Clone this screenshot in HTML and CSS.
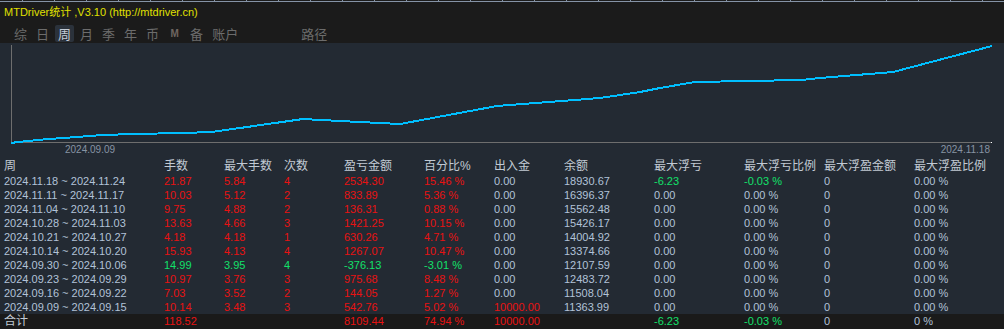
FILE: index.html
```html
<!DOCTYPE html>
<html lang="zh">
<head>
<meta charset="utf-8">
<title>MTDriver统计</title>
<link rel="stylesheet" href="styles.css">
</head>
<body>
<div class="app">
  <header class="top">
    <div class="ruler"></div>
    <div class="title">MTDriver统计 ,V3.10 (http://mtdriver.cn)</div>
    <nav class="tabs">
      <span class="tab">综</span>
      <span class="tab">日</span>
      <span class="tab active">周</span>
      <span class="tab">月</span>
      <span class="tab">季</span>
      <span class="tab">年</span>
      <span class="tab">币</span>
      <span class="tab tab-m">M</span>
      <span class="tab">备</span>
      <span class="tab">账户</span>
      <span class="tab tab-path">路径</span>
    </nav>
  </header>

  <div class="chart">
    <svg width="1004" height="116" viewBox="0 0 1004 116">
      <line x1="11.5" y1="2" x2="11.5" y2="100" stroke="#6e6e6e" stroke-width="1"/>
      <line x1="11" y1="99.5" x2="991" y2="99.5" stroke="#6e6e6e" stroke-width="1"/>
      <rect x="991" y="99" width="1" height="1" fill="#ffffff"/>
      <polyline fill="none" stroke="#00bfff" stroke-width="2" shape-rendering="crispEdges"
        points="11,100 18,99 43,96.5 103,92 133,91 183,90 212,89 303,76 340,78 400,81 497,63 600,55 640,49 660,45 695,39 747,38 802,37 820,35 893,29 992,3"/>
      <text x="65" y="110" class="axis-label">2024.09.09</text>
      <text x="990" y="110" class="axis-label" text-anchor="end">2024.11.18</text>
    </svg>
  </div>

  <div class="grid">
    <div class="row head">
      <span>周</span><span>手数</span><span>最大手数</span><span>次数</span><span>盈亏金额</span><span>百分比%</span><span>出入金</span><span>余额</span><span>最大浮亏</span><span>最大浮亏比例</span><span>最大浮盈金额</span><span>最大浮盈比例</span>
    </div>
    <div class="row">
      <span>2024.11.18 ~ 2024.11.24</span><span class="r">21.87</span><span class="r">5.84</span><span class="r">4</span><span class="r">2534.30</span><span class="r">15.46 %</span><span>0.00</span><span>18930.67</span><span class="g">-6.23</span><span class="g">-0.03 %</span><span>0</span><span>0.00 %</span>
    </div>
    <div class="row">
      <span>2024.11.11 ~ 2024.11.17</span><span class="r">10.03</span><span class="r">5.12</span><span class="r">2</span><span class="r">833.89</span><span class="r">5.36 %</span><span>0.00</span><span>16396.37</span><span>0.00</span><span>0.00 %</span><span>0</span><span>0.00 %</span>
    </div>
    <div class="row">
      <span>2024.11.04 ~ 2024.11.10</span><span class="r">9.75</span><span class="r">4.88</span><span class="r">2</span><span class="r">136.31</span><span class="r">0.88 %</span><span>0.00</span><span>15562.48</span><span>0.00</span><span>0.00 %</span><span>0</span><span>0.00 %</span>
    </div>
    <div class="row">
      <span>2024.10.28 ~ 2024.11.03</span><span class="r">13.63</span><span class="r">4.66</span><span class="r">3</span><span class="r">1421.25</span><span class="r">10.15 %</span><span>0.00</span><span>15426.17</span><span>0.00</span><span>0.00 %</span><span>0</span><span>0.00 %</span>
    </div>
    <div class="row">
      <span>2024.10.21 ~ 2024.10.27</span><span class="r">4.18</span><span class="r">4.18</span><span class="r">1</span><span class="r">630.26</span><span class="r">4.71 %</span><span>0.00</span><span>14004.92</span><span>0.00</span><span>0.00 %</span><span>0</span><span>0.00 %</span>
    </div>
    <div class="row">
      <span>2024.10.14 ~ 2024.10.20</span><span class="r">15.93</span><span class="r">4.13</span><span class="r">4</span><span class="r">1267.07</span><span class="r">10.47 %</span><span>0.00</span><span>13374.66</span><span>0.00</span><span>0.00 %</span><span>0</span><span>0.00 %</span>
    </div>
    <div class="row">
      <span>2024.09.30 ~ 2024.10.06</span><span class="g">14.99</span><span class="g">3.95</span><span class="g">4</span><span class="g">-376.13</span><span class="g">-3.01 %</span><span>0.00</span><span>12107.59</span><span>0.00</span><span>0.00 %</span><span>0</span><span>0.00 %</span>
    </div>
    <div class="row">
      <span>2024.09.23 ~ 2024.09.29</span><span class="r">10.97</span><span class="r">3.76</span><span class="r">3</span><span class="r">975.68</span><span class="r">8.48 %</span><span>0.00</span><span>12483.72</span><span>0.00</span><span>0.00 %</span><span>0</span><span>0.00 %</span>
    </div>
    <div class="row">
      <span>2024.09.16 ~ 2024.09.22</span><span class="r">7.03</span><span class="r">3.52</span><span class="r">2</span><span class="r">144.05</span><span class="r">1.27 %</span><span>0.00</span><span>11508.04</span><span>0.00</span><span>0.00 %</span><span>0</span><span>0.00 %</span>
    </div>
    <div class="row">
      <span>2024.09.09 ~ 2024.09.15</span><span class="r">10.14</span><span class="r">3.48</span><span class="r">3</span><span class="r">542.76</span><span class="r">5.02 %</span><span class="r">10000.00</span><span>11363.99</span><span>0.00</span><span>0.00 %</span><span>0</span><span>0.00 %</span>
    </div>
    <div class="row total">
      <span class="cjk">合计</span><span class="r">118.52</span><span></span><span></span><span class="r">8109.44</span><span class="r">74.94 %</span><span class="r">10000.00</span><span></span><span class="g">-6.23</span><span class="g">-0.03 %</span><span>0</span><span>0 %</span>
    </div>
  </div>
</div>
</body>
</html>
```

FILE: styles.css
```css
* { box-sizing: border-box; }

html, body {
  margin: 0;
  padding: 0;
  background: #232a33;
}

body {
  width: 1004px;
  height: 329px;
  overflow: hidden;
  font-family: "Liberation Sans", "Noto Sans CJK SC", sans-serif;
}

.app {
  width: 1004px;
  height: 329px;
  display: flex;
  flex-direction: column;
  background: #232a33;
}

.top {
  background: #1b1b1b;
  height: 43px;
  display: flex;
  flex-direction: column;
}

.ruler {
  height: 2px;
  border-bottom: 1px solid #8593a6;
  background-image: repeating-linear-gradient(to right,
    transparent 0, transparent 22px,
    #8593a6 22px, #8593a6 23px,
    transparent 23px, transparent 32px);
}

.title {
  height: 20px;
  line-height: 20px;
  padding-left: 4px;
  font-size: 11px;
  color: #e0e000;
  white-space: nowrap;
}

.tabs {
  display: flex;
  align-items: center;
  gap: 3px;
  padding: 2px 0 0 11px;
  height: 21px;
}

.tab {
  height: 17px;
  line-height: 17px;
  padding: 0 3px;
  min-width: 19px;
  text-align: center;
  font-size: 13px;
  color: #6c6c6c;
  font-family: "Noto Sans CJK SC", sans-serif;
  border-radius: 2px;
}

.tab.active {
  background: #2b323b;
  color: #c4ccd6;
}

.tab-m {
  font-family: "Liberation Sans", sans-serif;
  font-weight: bold;
  font-size: 10px;
  color: #6e6660;
}

.tab-path {
  margin-left: 54px;
}

.chart {
  height: 116px;
}

.chart svg {
  display: block;
}

.axis-label {
  font-family: "Liberation Sans", sans-serif;
  font-size: 10px;
  fill: #8793a3;
}

.grid {
  display: flex;
  flex-direction: column;
  flex: 1;
}

.row {
  display: grid;
  grid-template-columns: 160px 60px 60px 60px 80px 70px 70px 90px 90px 80px 90px 1fr;
  padding-left: 4px;
  height: 14px;
  line-height: 14px;
  font-size: 11px;
  color: #b2c2d8;
  white-space: nowrap;
}

.row.head {
  height: 15px;
  line-height: 15px;
  font-size: 12px;
  color: #c2cad4;
  font-family: "Liberation Sans", "Noto Sans CJK SC", sans-serif;
}

.row.total {
  margin-top: auto;
  height: 16px;
  line-height: 15px;
  background: #1a1a1a;
  border-bottom: 1px solid #8593a6;
}

.cjk {
  font-size: 12px;
  color: #c2cad4;
}

.r { color: #e81212; }
.g { color: #12e06a; }
```
